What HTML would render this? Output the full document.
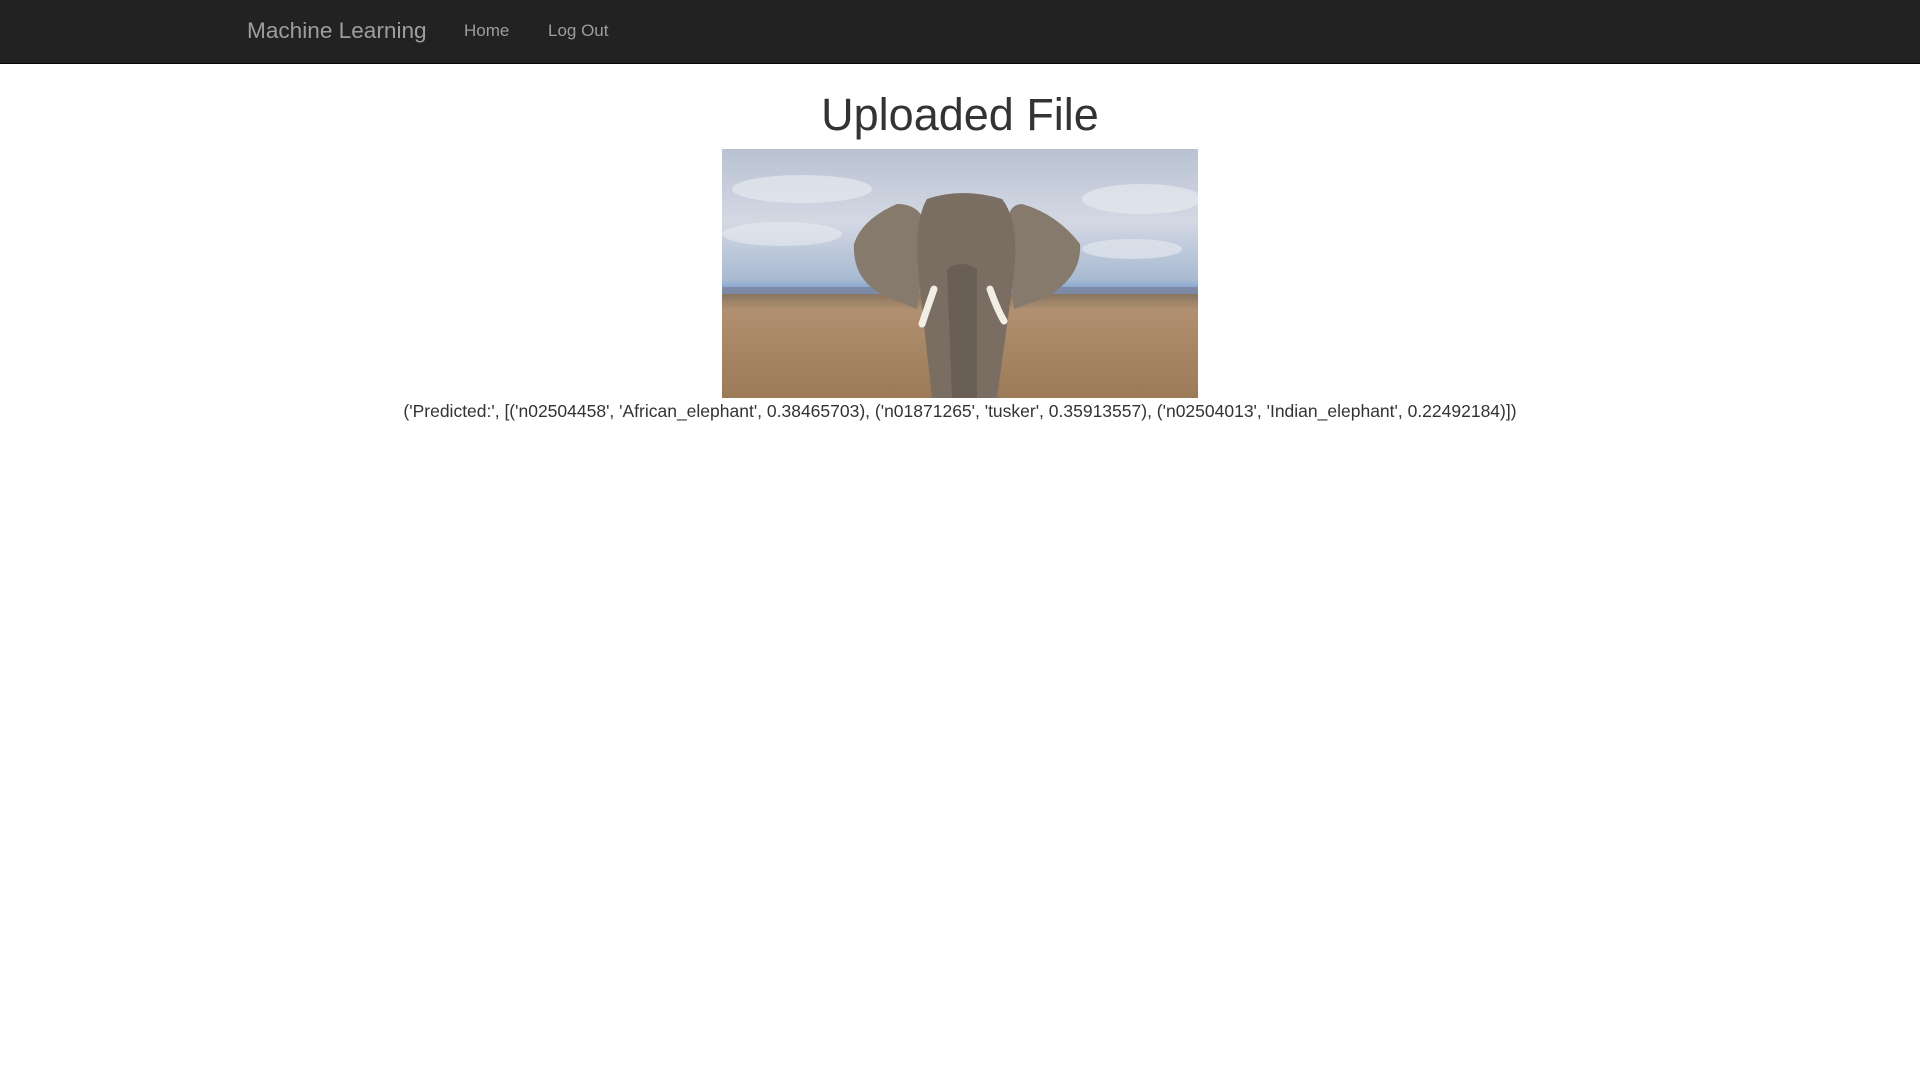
<!DOCTYPE html>
<html><head><meta charset="utf-8"><style>
body{margin:0;background:#fff;font-family:"Liberation Sans",Arial,sans-serif;width:1920px;height:1080px;overflow:hidden;position:relative}
.nav{position:absolute;left:0;top:0;width:1920px;height:63px;background:#222;border-bottom:1px solid #080808}
.nav a{position:absolute;color:#9d9d9d;text-decoration:none;white-space:nowrap}
h1{position:absolute;left:0;width:1920px;top:89px;margin:0;text-align:center;font-weight:normal;font-size:45px;color:#333}
.img{position:absolute;left:722px;top:149px;width:476px;height:249px}
p{position:absolute;left:0;width:1920px;top:401px;margin:0;text-align:center;font-size:17.5px;color:#333}
</style></head><body>
<div class="nav">
<a style="left:247px;top:18px;font-size:22.6px">Machine Learning</a>
<a style="left:464px;top:21px;font-size:17px">Home</a>
<a style="left:548px;top:21px;font-size:17px">Log Out</a>
</div>
<h1>Uploaded File</h1>
<svg class="img" viewBox="0 0 476 249">
<defs>
<linearGradient id="sky" x1="0" y1="0" x2="0" y2="1"><stop offset="0" stop-color="#b9c2d2"/><stop offset="0.5" stop-color="#d3d8e3"/><stop offset="0.9" stop-color="#a8bad2"/><stop offset="1" stop-color="#6f9ccc"/></linearGradient>
<linearGradient id="gr" x1="0" y1="0" x2="0" y2="1"><stop offset="0" stop-color="#8a7560"/><stop offset="0.15" stop-color="#b09070"/><stop offset="1" stop-color="#9c7a58"/></linearGradient>
</defs>
<rect width="476" height="145" fill="url(#sky)"/>
<ellipse cx="80" cy="40" rx="70" ry="14" fill="#e6e9ef" opacity=".7"/>
<ellipse cx="60" cy="85" rx="60" ry="12" fill="#e8ebf0" opacity=".6"/>
<ellipse cx="420" cy="50" rx="60" ry="15" fill="#e6e9ef" opacity=".7"/>
<ellipse cx="410" cy="100" rx="50" ry="10" fill="#e8ebf0" opacity=".6"/>
<rect y="138" width="476" height="8" fill="#7c8aa5"/>
<rect y="145" width="476" height="104" fill="url(#gr)"/>
<path d="M175 55 Q140 70 132 95 Q130 135 170 150 L195 160 L205 80 Q200 55 175 55Z" fill="#867a6d"/>
<path d="M300 55 Q335 65 358 95 Q360 130 320 150 L292 160 L285 80 Q285 55 300 55Z" fill="#867a6d"/>
<path d="M205 50 Q240 38 280 50 Q300 75 290 140 L275 249 L210 249 L198 140 Q190 75 205 50Z" fill="#7a6e62"/>
<path d="M225 120 Q240 110 255 120 L255 249 L230 249Z" fill="#6a5f55"/>
<path d="M212 140 Q205 160 200 175" stroke="#f2eee6" stroke-width="7" stroke-linecap="round" fill="none"/>
<path d="M268 140 Q275 160 282 172" stroke="#f2eee6" stroke-width="7" stroke-linecap="round" fill="none"/>
</svg>
<p>('Predicted:', [('n02504458', 'African_elephant', 0.38465703), ('n01871265', 'tusker', 0.35913557), ('n02504013', 'Indian_elephant', 0.22492184)])</p>
</body></html>
